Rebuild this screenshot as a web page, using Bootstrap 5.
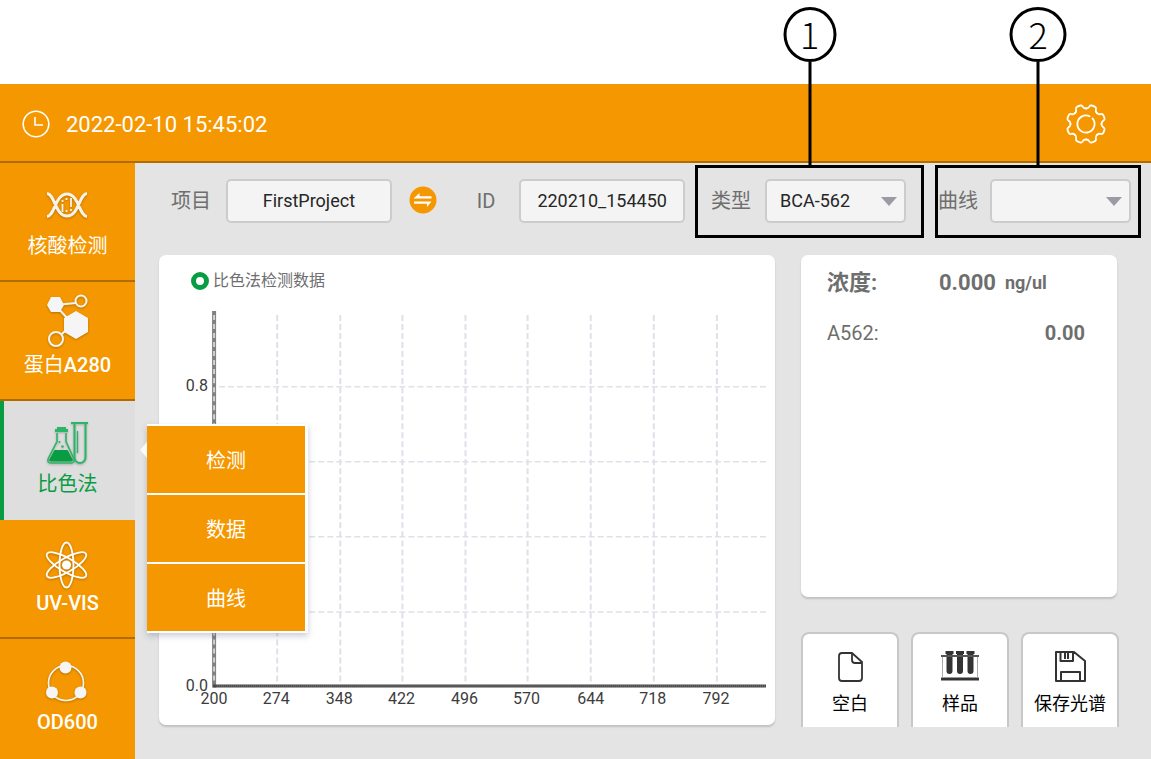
<!DOCTYPE html>
<html lang="zh-CN">
<head>
<meta charset="utf-8">
<meta name="viewport" content="width=device-width, initial-scale=1">
<title>比色法</title>
<link href="https://cdn.jsdelivr.net/npm/bootstrap@5.3.0/dist/css/bootstrap.min.css" rel="stylesheet">
<style>
  :root { --brand: #f59700; --brand-dark: #b06c00; --leaf: #089c43; --ink: #6e6e6e; }
  body { font-family: Roboto, "Noto Sans CJK SC", sans-serif; font-size: 20px; line-height: 30px; color: var(--ink); background: #fff; padding-top: 84px; }
  .topbar { background: var(--brand); color: #fff; height: 79px; border-bottom: 2px solid var(--brand-dark); padding: 2px 44px 0 22px; font-size: 22px; }
  .topbar time { padding-top: 2px; }
  .shell { background: #e4e4e4; }
  .side { width: 135px; background: var(--brand); }
  .side-item { height: 119px; padding-top: 13px; border-bottom: 2px solid var(--brand-dark); color: #fff; text-decoration: none; }
  .side-item svg { width: 54px; height: 54px; margin: 0 2px 1px 0; overflow: visible; filter: drop-shadow(0 1px 1px rgba(0,0,0,.25)); }
  .side-item.active { background: #dedede; color: var(--leaf); border-bottom: 0; border-left: 4px solid var(--leaf); padding-right: 4px; }
  .side li:last-child .side-item { border-bottom: 0; }
  .latin { font-weight: 500; }
  .submenu { left: 147px; top: 23px; width: 161px; z-index: 5; background: #fff; padding: 2px 3px 2px 0; gap: 2px; box-shadow: 0 3px 6px rgba(80,90,130,.3); }
  .submenu::before { content: ""; position: absolute; left: -7px; top: 18px; border: 8px solid transparent; border-left: 0; border-right: 7px solid #fafafa; }
  .submenu a { background: var(--brand); color: #fff; height: 67px; padding-top: 2px; text-decoration: none; }
  .tools { padding: 2px 10px 0 36px; }
  .tools label, .tools .field, .pick-wrap { margin-bottom: 2px; }
  .swap-btn { margin: 0 0 3px 17px; }
  .field, .pick { height: 44px; border: 2px solid #ccc; border-radius: 5px; background: #f4f4f4; color: #262626; font-size: 18px; line-height: 26px; }
  .field { flex: 1 1 0; min-width: 0; text-align: center; padding: 0; }
  .pick { width: 100%; appearance: none; padding: 0 34px 0 13px; }
  .pick-wrap { flex: 1 1 0; }
  .pick-wrap::after { content: ""; position: absolute; right: 9px; top: 18px; border: 8px solid transparent; border-bottom: 0; border-top: 9px solid #9b9ba6; pointer-events: none; }
  .swap { width: 28px; height: 28px; }
  .frame { height: 73px; border: 3px solid #000; }
  .frame-type { width: 229px; padding: 0 15px 0 13px; gap: 14px; }
  .frame-curve { width: 206px; padding: 0 7px 0 0; gap: 12px; }
  .callout { left: 50%; bottom: 100%; transform: translateX(-50%); color: #000; z-index: 6; }
  .callout-num { width: 53px; height: 55px; border: 3px solid #000; border-radius: 50%; font: 300 36px/46px "Noto Sans CJK SC", sans-serif; text-align: center; background: #fff; }
  .callout-num.wide { width: 57px; }
  .callout-stem { width: 3px; height: 106px; background: #000; }
  .work { padding: 17px 32px 33px 24px; gap: 26px; }
  .panel { background: #fff; border-radius: 7px; box-shadow: 0 2px 2px rgba(0,0,0,.16); }
  .chart-panel { min-width: 0; }
  .legend-row { height: 50px; padding: 2px 0 0 32px; gap: 4px; font-size: 16px; }
  .ring { width: 18px; height: 18px; border: 5px solid var(--leaf); border-radius: 50%; }
  .chart text { font-size: 16px; fill: #3c3c3c; }
  .aside-col { width: 318px; }
  .readout { padding: 13px 32px 0 26px; margin-right: 2px; min-height: 342px; }
  .conc { font-size: 22px; font-weight: 700; padding-right: 38px; }
  .conc-name { width: 112px; }
  .unit { font-size: 18px; margin-left: 9px; }
  .acts { gap: 12px; margin-top: 35px; }
  .act { flex: 1 1 0; height: 95px; background: #fff; border: 2px solid #c8c8c8; border-bottom: 0; border-radius: 8px 8px 0 0; color: #000; font-size: 18px; line-height: 28px; padding: 14px 0 0; gap: 6px; }
  .act svg { width: 40px; height: 36px; }
</style>
</head>
<body class="d-flex flex-column min-vh-100">

<header class="topbar d-flex align-items-center">
  <svg width="28" height="28" viewBox="0 0 28 28" fill="none" stroke="#fff" stroke-width="1.6" aria-hidden="true"><circle cx="14" cy="14" r="12.8"/><path d="M13 7v8h8"/></svg>
  <time class="ms-3" datetime="2022-02-10T15:45:02">2022-02-10 15:45:02</time>
  <button type="button" class="btn p-0 border-0 ms-auto d-flex" aria-label="设置">
    <svg width="42" height="42" viewBox="-21 -21 42 42" fill="none" stroke="#fff" stroke-width="1.8" stroke-linecap="round">
      <defs><path id="tooth" d="M-5.93-14.3C-3.7-15.2-3.7-16-3.5-17.6Q-3.3-18.9-2-19.2Q0-19.7 2-19.2Q3.3-18.9 3.5-17.6C3.7-16 3.7-15.2 5.93-14.3"/></defs>
      <use href="#tooth" transform="rotate(22.5)"/><use href="#tooth" transform="rotate(67.5)"/><use href="#tooth" transform="rotate(112.5)"/><use href="#tooth" transform="rotate(157.5)"/>
      <use href="#tooth" transform="rotate(202.5)"/><use href="#tooth" transform="rotate(247.5)"/><use href="#tooth" transform="rotate(292.5)"/><use href="#tooth" transform="rotate(337.5)"/>
      <path d="M6.5-5.6A8.6 8.6 0 1 1 3.6-7.8"/>
    </svg>
  </button>
</header>

<div class="shell d-flex flex-grow-1">
  <nav class="side flex-shrink-0" aria-label="功能">
    <ul class="list-unstyled m-0">
      <li><a href="#" class="side-item d-flex flex-column align-items-center">
        <svg viewBox="0 0 54 54" fill="none" stroke="#f7f3ea" stroke-width="3" aria-hidden="true"><path d="M7 17.500C15 18 15 40 27 40S39 18 47 17.500M7 40.500C15 40 15 18 27 18S39 40 47 40.500"/><path stroke-width="1.800" d="M22.500 24v2M22.500 28v8M26.500 22v2M26.500 34v2M31 22v9M31 33v2"/></svg>
        核酸检测</a></li>
      <li><a href="#" class="side-item d-flex flex-column align-items-center">
        <svg viewBox="0 0 54 54" fill="none" stroke="#f5f5f5" stroke-width="2" aria-hidden="true"><path d="M15 10l21-2M15 10l14 15M22 39l8-8"/><circle cx="41" cy="6" r="5.500"/><circle cx="16" cy="44" r="7"/><path fill="#f5f5f5" stroke="none" d="M7 10l4-8h9l4 8-4 7h-9zM36 16l12 7v14l-12 7-12-7V23z"/></svg>
        <span>蛋白<span class="latin">A280</span></span></a></li>
      <li class="position-relative"><a href="#" class="side-item active d-flex flex-column align-items-center" aria-current="page">
        <svg viewBox="0 0 54 54" fill="none" stroke="#2bb566" stroke-width="2" aria-hidden="true"><path fill="#2bb566" stroke="none" d="M17 13h9v2h2v3H15v-3h2z"/><path stroke-width="1.600" d="M17 19v8.500L8.500 44q-2 4.500 2 5h21q4-.5 2-5L26 27.500V19"/><path fill="#089c43" stroke="none" d="M14.500 36h13l5 9q1 2.500-1.500 2.500H11q-2.500 0-1.500-2.500z"/><circle cx="19.500" cy="28" r="1" fill="#2bb566" stroke="none"/><circle cx="22.500" cy="32.500" r="1.200" fill="#2bb566" stroke="none"/><path d="M31 9h17M34.500 9v34.500a5.500 5.500 0 0 0 11 0V9"/><path stroke-width="1.300" d="M37.500 17v22"/></svg>
        比色法</a>
        <div class="submenu position-absolute d-grid">
          <a href="#" class="d-flex align-items-center justify-content-center">检测</a>
          <a href="#" class="d-flex align-items-center justify-content-center">数据</a>
          <a href="#" class="d-flex align-items-center justify-content-center">曲线</a>
        </div></li>
      <li><a href="#" class="side-item d-flex flex-column align-items-center">
        <svg viewBox="0 0 54 54" fill="none" stroke="#fff" stroke-width="1.800" aria-hidden="true"><ellipse cx="26.500" cy="32" rx="7" ry="22.500"/><ellipse cx="26.500" cy="32" rx="7" ry="22.500" transform="rotate(60 26.500 32)"/><ellipse cx="26.500" cy="32" rx="7" ry="22.500" transform="rotate(120 26.500 32)"/><circle cx="26.500" cy="32" r="4.500" fill="#fff" stroke="none"/></svg>
        <span class="latin">UV-VIS</span></a></li>
      <li><a href="#" class="side-item d-flex flex-column align-items-center">
        <svg viewBox="0 0 54 54" fill="#f5f5f5" aria-hidden="true"><circle cx="26" cy="31" r="17.500" fill="none" stroke="#f5f5f5" stroke-width="1.600"/><circle cx="25.500" cy="15.500" r="6"/><circle cx="12" cy="40.500" r="6"/><circle cx="40.500" cy="40.500" r="6"/></svg>
        <span class="latin">OD600</span></a></li>
    </ul>
  </nav>

  <main class="flex-grow-1 d-flex flex-column" style="min-width:0">
    <form class="tools d-flex align-items-center">
      <label for="project">项目</label>
      <input id="project" class="field" style="margin-left:15px" type="text" value="FirstProject">
      <button type="button" class="swap-btn btn p-0 border-0 d-flex" aria-label="切换项目">
        <svg class="swap" viewBox="0 0 28 28"><circle cx="14" cy="14" r="13.500" fill="#f59700"/><path fill="#fff" d="M4.500 12.500L10.500 7v3.300H22.500v2.200zM22.500 15.500L18 21v-3.300H5v-2.200z"/></svg>
      </button>
      <label for="sample" class="px-4" style="margin-left:16px">ID</label>
      <input id="sample" class="field" type="text" value="220210_154450">
      <div class="frame frame-type position-relative d-flex align-items-center flex-shrink-0" style="margin-left:10px">
        <div class="callout position-absolute d-flex flex-column align-items-center"><div class="callout-num">1</div><div class="callout-stem"></div></div>
        <label for="kind">类型</label>
        <div class="pick-wrap position-relative d-flex"><select id="kind" class="pick"><option>BCA-562</option></select></div>
      </div>
      <div class="frame frame-curve position-relative d-flex align-items-center flex-shrink-0" style="margin-left:11px">
        <div class="callout position-absolute d-flex flex-column align-items-center"><div class="callout-num wide">2</div><div class="callout-stem"></div></div>
        <label for="curve">曲线</label>
        <div class="pick-wrap position-relative d-flex"><select id="curve" class="pick"><option value=""></option></select></div>
      </div>
    </form>

    <div class="work d-flex flex-grow-1 align-items-start">
      <section class="panel chart-panel flex-grow-1">
        <div class="legend-row d-flex align-items-center"><span class="ring"></span>比色法检测数据</div>
        <svg class="chart d-block w-100" viewBox="0 0 615 419" role="img" aria-label="比色法检测数据">
          <g stroke="#dfe1e9" stroke-width="2" stroke-dasharray="6 3">
            <path d="M118 10v366M181 10v366M243 10v366M306 10v366M368 10v366M431 10v366M494 10v366M557 10v366"/>
            <path stroke-width="1.500" d="M60 81.500h546M60 156.500h546M60 231.500h546M60 306.500h546"/>
          </g>
          <path d="M55 6v376" stroke="#808080" stroke-width="4"/>
          <path d="M55 10v366" stroke="#cfd1d8" stroke-width="2" stroke-dasharray="5 4"/>
          <path d="M54 380.500h552" stroke="#484848" stroke-width="3"/>
          <path d="M58 380.500h548" stroke="#888" stroke-width="1" stroke-dasharray="1 1"/>
          <g text-anchor="end"><text x="49" y="86">0.8</text><text x="49" y="385">0.0</text></g>
          <g text-anchor="middle">
            <text x="55" y="398">200</text><text x="117" y="398">274</text><text x="180" y="398">348</text><text x="242" y="398">422</text><text x="305" y="398">496</text><text x="367" y="398">570</text><text x="431" y="398">644</text><text x="493" y="398">718</text><text x="556" y="398">792</text>
          </g>
        </svg>
      </section>

      <aside class="aside-col flex-shrink-0 d-flex flex-column">
        <section class="panel readout">
          <div class="conc d-flex align-items-center"><span class="conc-name">浓度:</span><span>0.000</span><span class="unit">ng/ul</span></div>
          <div class="d-flex justify-content-between mt-3 pt-1"><span>A562:</span><span class="fw-bold">0.00</span></div>
        </section>
        <div class="acts d-flex">
          <button type="button" class="act d-flex flex-column align-items-center">
            <svg viewBox="0 0 40 36" fill="none" stroke="#333" stroke-width="1.800" stroke-linejoin="round"><path d="M12 5h10l10 9v16q0 3-3 3H12q-3 0-3-3V8q0-3 3-3z"/><path d="M22 5v7q0 3 3 3h7"/></svg>空白</button>
          <button type="button" class="act d-flex flex-column align-items-center">
            <svg viewBox="0 0 40 36" fill="#333"><path d="M5.500 3h8v3h-1v17a3 3 0 0 1-6 0V6h-1zM16 3h8v3h-1v17a3 3 0 0 1-6 0V6h-1zM26.500 3h8v3h-1v17a3 3 0 0 1-6 0V6h-1zM1 29.500h38v3H1z"/><path d="M1 7h38v2H1z" fill="#555"/><path d="M2.500 9v21M37.500 9v21" stroke="#aaa"/></svg>样品</button>
          <button type="button" class="act d-flex flex-column align-items-center">
            <svg viewBox="0 0 40 36" fill="none" stroke="#333" stroke-width="2" stroke-linejoin="round"><path d="M6 4h18l11 9v20H6zM10.500 4v9H23V4M15 5v6M18 5v6M11 33v-9h19v9"/></svg>保存光谱</button>
        </div>
      </aside>
    </div>
  </main>
</div>

<script src="https://cdn.jsdelivr.net/npm/bootstrap@5.3.0/dist/js/bootstrap.bundle.min.js"></script>
</body>
</html>
